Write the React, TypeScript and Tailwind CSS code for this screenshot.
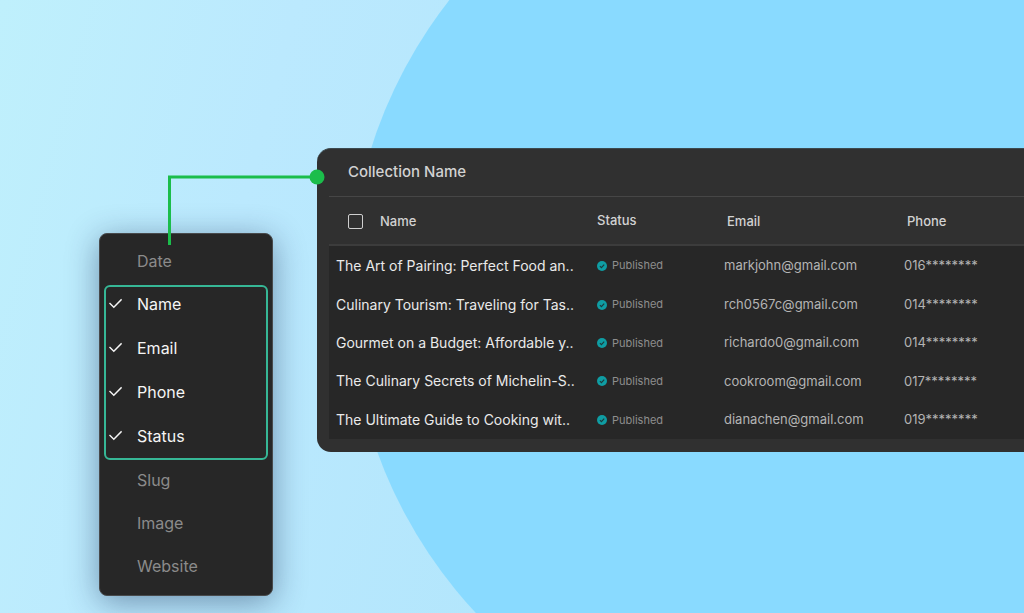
import { useState } from 'react';

type Row = { title: string; email: string; phone: string };

const ROWS: Row[] = [
  { title: 'The Art of Pairing: Perfect Food an..', email: 'markjohn@gmail.com', phone: '016********' },
  { title: 'Culinary Tourism: Traveling for Tas..', email: 'rch0567c@gmail.com', phone: '014********' },
  { title: 'Gourmet on a Budget: Affordable y..', email: 'richardo0@gmail.com', phone: '014********' },
  { title: 'The Culinary Secrets of Michelin-S..', email: 'cookroom@gmail.com', phone: '017********' },
  { title: 'The Ultimate Guide to Cooking wit..', email: 'dianachen@gmail.com', phone: '019********' },
];

function FieldOption({ label, defaultChecked = false }: { label: string; defaultChecked?: boolean }) {
  const [checked, setChecked] = useState(defaultChecked);

  return (
    <label className={`relative flex h-6 cursor-pointer items-center gap-[15px] text-base ${checked ? 'text-[#f5f5f5]' : 'text-[#8b8b8b]'}`}>
      <input type="checkbox" checked={checked} onChange={() => setChecked(!checked)} className="peer sr-only" />
      <svg viewBox="0 0 13 13" className="invisible size-[13px] peer-checked:visible" fill="none" stroke="currentColor" strokeWidth="1.4">
        <path d="M0.5 5 4.8 9.3 12.6 1.3" />
      </svg>
      {label}
    </label>
  );
}

function FieldMenu() {
  return (
    <aside className="mt-[233px] w-[174px] shrink-0 rounded-lg border border-[#484a4c] bg-[#272727] px-1 pt-[15px] pb-[17px] shadow-[0_6px_32px_rgba(20,40,80,0.45)]">
      <div className="pl-[5px]">
        <FieldOption label="Date" />
      </div>
      {/* Fields currently shown in the table */}
      <div className="mt-3 flex flex-col gap-5 rounded-md border-2 border-[#36b796] pt-[5px] pb-[10px] pl-[3px]">
        <FieldOption label="Name" defaultChecked />
        <FieldOption label="Email" defaultChecked />
        <FieldOption label="Phone" defaultChecked />
        <FieldOption label="Status" defaultChecked />
      </div>
      <div className="mt-2 flex flex-col gap-[19px] pl-[5px]">
        <FieldOption label="Slug" />
        <FieldOption label="Image" />
        <FieldOption label="Website" />
      </div>
    </aside>
  );
}

function PublishedBadge() {
  return (
    <span className="flex items-center gap-[5px] text-[11px] text-[#8e8e8e]">
      <svg viewBox="0 0 10 10" className="size-[10px]">
        <circle cx="5" cy="5" r="5" fill="#0f9da3" />
        <path d="M2.9 5.2 4.4 6.7 7.2 3.6" fill="none" stroke="#1d3a3c" strokeWidth="1.1" />
      </svg>
      Published
    </span>
  );
}

function CollectionTable() {
  return (
    <section className="relative mt-[148px] min-w-0 flex-1 rounded-l-[14px] border-t border-[#3c4a50] bg-[#303030] pb-[13px] pl-3">
      {/* Connector to the field menu */}
      <svg viewBox="0 0 157 76" className="pointer-events-none absolute top-5 -left-[149px] h-[76px] w-[157px]" fill="none">
        <path d="M1.5 76V8H149" stroke="#1bbd4b" strokeWidth="3" />
        <circle cx="149" cy="8" r="7.5" fill="#1bbd4b" />
      </svg>
      <h1 className="flex h-12 items-center border-b border-[#464646] pl-[19px] text-[15px] font-medium text-[#d2d2d2]">Collection Name</h1>
      <table className="h-[242px] w-full table-fixed border-collapse text-left whitespace-nowrap">
        <colgroup>
          <col className="w-[268px]" />
          <col className="w-[127px]" />
          <col className="w-[180px]" />
          <col />
        </colgroup>
        <thead>
          <tr className="h-12 border-b-2 border-[#3c3c3c] text-[13px] text-[#d2d2d2]">
            <th className="pt-0.5 pl-[19px] font-medium">
              <span className="flex items-center gap-[17px]">
                <input type="checkbox" aria-label="Select all" className="size-[15px] appearance-none rounded-[2px] border border-[#cfcfcf] checked:bg-[#0f9da3]" />
                Name
              </span>
            </th>
            <th className="font-medium">Status</th>
            <th className="pt-0.5 pl-[3px] font-medium">Email</th>
            <th className="pt-0.5 pl-[3px] font-medium">Phone</th>
          </tr>
        </thead>
        <tbody className="bg-[#272727] text-[13px] text-[#b4b4b4]">
          {ROWS.map(row => (
            <tr key={row.email}>
              <td className="pl-[7px] text-sm text-[#eaeaea]">{row.title}</td>
              <td><PublishedBadge /></td>
              <td>{row.email}</td>
              <td>{row.phone}</td>
            </tr>
          ))}
        </tbody>
      </table>
    </section>
  );
}

export default function App() {
  return (
    <main className="relative isolate flex min-h-screen items-start gap-11 overflow-hidden bg-[linear-gradient(105deg,#bff0fc_0%,#bbe9fe_25%,#b3e6fc_55%)] pl-[99px] font-['Inter',sans-serif]">
      <div className="absolute -top-[181px] left-[349px] -z-10 size-[944px] rounded-full bg-[#89daff]" />
      <FieldMenu />
      <CollectionTable />
    </main>
  );
}
